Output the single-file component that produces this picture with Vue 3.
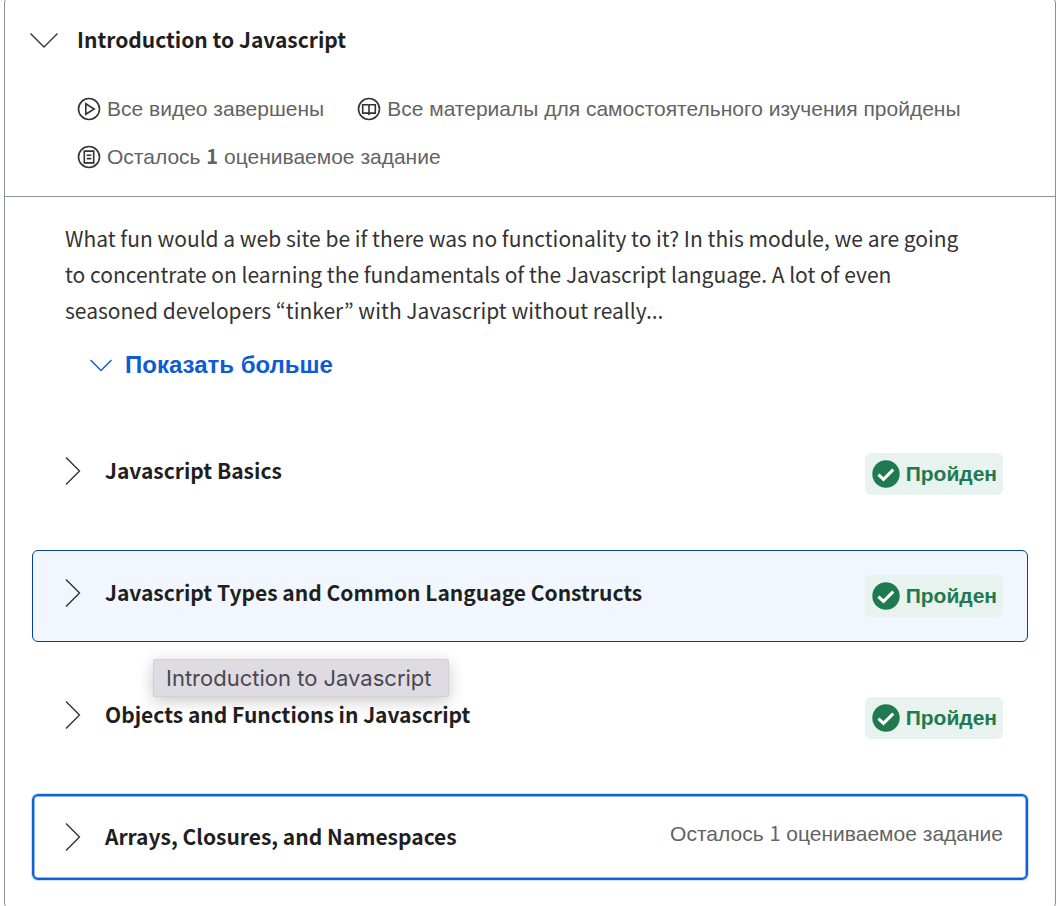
<script setup>
import { ref } from 'vue'

const lessons = ref([
  { title: 'Javascript Basics', done: true },
  { title: 'Javascript Types and Common Language Constructs', done: true, state: 'hovered' },
  { title: 'Objects and Functions in Javascript', done: true },
  { title: 'Arrays, Closures, and Namespaces', left: 1, state: 'focused' },
])
</script>

<template>
  <main class="page">
    <section class="card">
      <header class="head">
        <button class="module" type="button" aria-expanded="true">
          <svg class="chev-down" width="28" height="16" viewBox="0 0 28 16" aria-hidden="true">
            <path d="M0.5 1.5L14 15L27.5 1.5" />
          </svg>
          <h2 class="title">Introduction to Javascript</h2>
        </button>
        <ul class="meta">
          <li>
            <svg class="icon" width="24" height="24" viewBox="0 0 24 24" aria-hidden="true">
              <circle cx="12" cy="12" r="10.5" />
              <path d="M8.8 6.8V17.2L17.2 12Z" />
            </svg>
            <span>Все видео завершены</span>
          </li>
          <li>
            <svg class="icon" width="24" height="24" viewBox="0 0 24 24" aria-hidden="true">
              <circle cx="12" cy="12" r="10.5" />
              <path d="M12 8.4L11 7.7H5.7V16.1H11L12 17.2L13 16.1H18.3V7.7H13L12 8.4V17.6" />
            </svg>
            <span>Все материалы для самостоятельного изучения пройдены</span>
          </li>
          <li>
            <svg class="icon" width="24" height="24" viewBox="0 0 24 24" aria-hidden="true">
              <circle cx="12" cy="12" r="10.5" />
              <path d="M7.3 6.1H16.7V17.9H7.3ZM9.7 10.2H14.3M9.7 13.6H14.3" />
            </svg>
            <span>Осталось <strong class="num">1</strong> оцениваемое задание</span>
          </li>
        </ul>
      </header>

      <div class="body">
        <p class="about">
          What fun would a web site be if there was no functionality to it? In this module, we are going
          to concentrate on learning the fundamentals of the Javascript language. A lot of even
          seasoned developers “tinker” with Javascript without really...
        </p>
        <button class="more" type="button">
          <svg width="22" height="14" viewBox="0 0 22 14" aria-hidden="true">
            <path d="M0.5 2L11 12.5L21.5 2" />
          </svg>
          Показать больше
        </button>

        <ul class="lessons">
          <li v-for="lesson in lessons" :key="lesson.title">
            <button class="lesson" :class="lesson.state" type="button" aria-expanded="false">
              <svg class="chev-right" width="16" height="28" viewBox="0 0 16 28" aria-hidden="true">
                <path d="M1 0.5L14.5 14L1 27.5" />
              </svg>
              <span class="title">{{ lesson.title }}</span>
              <span v-if="lesson.done" class="badge">
                <svg width="28" height="28" viewBox="0 0 28 28" aria-hidden="true">
                  <circle cx="14" cy="14" r="13.7" />
                  <path d="M6.4 14.6L11.5 19.4L21.2 9.6" />
                </svg>
                Пройден
              </span>
              <span v-else class="left">Осталось <span class="num">{{ lesson.left }}</span> оцениваемое задание</span>
            </button>
          </li>
        </ul>
        <div class="tip" role="tooltip">Introduction to Javascript</div>
      </div>
    </section>
  </main>
</template>

<style>
body {
  background: #fff;
}
</style>

<style scoped>
.page {
  box-sizing: border-box;
  height: 100vh;
  padding: 0 4px;
  overflow: hidden;
  color: #1f1f1f;
  font-family: "Liberation Sans", Arial, sans-serif;
}
.card {
  margin-top: -3px;
  border: 1px solid #8c8f94;
  border-radius: 6px;
}
button {
  margin: 0;
  border: 0;
  background: none;
  color: inherit;
  font: inherit;
  text-align: left;
  cursor: pointer;
}
svg path,
svg circle {
  fill: none;
  stroke: #333;
}
ul {
  margin: 0;
  padding: 0;
  list-style: none;
}
.head {
  padding: 24px 25px 21px;
  border-bottom: 1px solid #8c8f94;
}
.module {
  display: flex;
  align-items: center;
  gap: 19px;
  width: 100%;
  padding: 0;
}
.chev-down path,
.chev-right path {
  stroke-width: 1.4;
}
.title {
  margin: 0;
  padding-bottom: 2px;
  font: 700 21px/34px "Noto Sans CJK KR", sans-serif;
}
.meta {
  display: flex;
  flex-wrap: wrap;
  gap: 12px 33px;
  padding: 33px 0 0 47px;
}
.meta li {
  display: flex;
  align-items: center;
  gap: 6px;
  color: #636363;
  font-size: 21px;
  line-height: 36px;
}
.icon path,
.icon circle {
  stroke-width: 1.6;
}
.num {
  font-family: "Noto Sans CJK KR", sans-serif;
  font-size: 20px;
  line-height: 20px;
}
.body {
  position: relative;
  padding: 23px 27px 28px;
}
.about {
  margin: 0;
  padding: 0 52px 0 33px;
  color: #333;
  font: 400 21px/36px "Noto Sans CJK KR", sans-serif;
}
.more {
  display: flex;
  align-items: center;
  gap: 13px;
  margin-top: 19px;
  padding: 0 58px;
  color: #0f5bd3;
  font-size: 24px;
  font-weight: 700;
  line-height: 36px;
}
.more path {
  stroke: #0f5bd3;
  stroke-width: 1.4;
}
.lessons {
  display: flex;
  flex-direction: column;
  gap: 30px;
  margin-top: 45px;
}
.lesson {
  display: flex;
  align-items: flex-start;
  box-sizing: border-box;
  width: 100%;
  padding: 24px 24px 24px 32px;
  border: 1px solid transparent;
  border-radius: 6px;
}
.hovered {
  border-color: #00419e;
  background: #f2f7ff;
}
.focused {
  outline: 2px solid #0f62d2;
  outline-offset: -2px;
  box-shadow: 0 0 0 1px #cfe0f7, inset 0 0 0 2px #8fb6ea;
}
.chev-right {
  flex: none;
  margin: 4px 24px 0 0;
}
.lesson .title {
  flex: 1;
}
.badge {
  display: flex;
  align-items: center;
  gap: 6px;
  padding: 0 6px 0 7px;
  border-radius: 6px;
  background: #e8f2ee;
  color: #1f7a50;
  font-size: 21px;
  font-weight: 700;
  line-height: 42px;
}
.badge circle {
  fill: #1f7a50;
  stroke: none;
}
.badge path {
  stroke: #fff;
  stroke-width: 3;
}
.left {
  color: #636363;
  font-size: 21px;
  line-height: 30px;
}
.tip {
  position: absolute;
  top: 462px;
  left: 148px;
  padding: 0 16px 0 12px;
  border: 1px solid #d2cfd6;
  border-radius: 2px;
  background: #dfdbe3;
  box-shadow: 0 4px 16px rgba(0, 0, 0, 0.22);
  color: #4a484d;
  font: 400 22px/36px Inter, sans-serif;
}
</style>
